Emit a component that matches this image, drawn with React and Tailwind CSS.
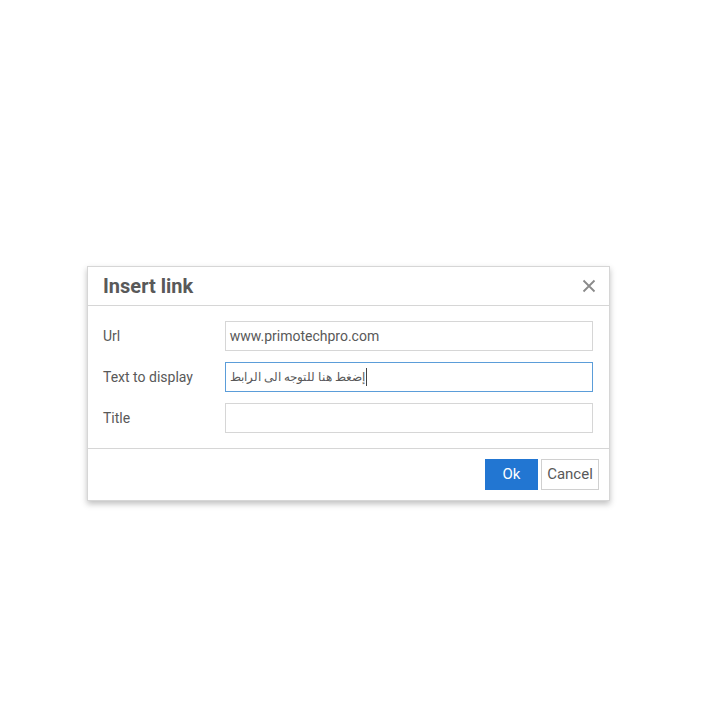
export default function App() {
  return (
    <div className="w-[720px] h-[726px] bg-white pt-[266px] pl-[87px]" style={{ fontFamily: 'Roboto, "Noto Sans", sans-serif' }}>
      <div className="w-[523px] bg-white border border-[#d6d6d6] shadow-[0_3px_6px_rgba(0,0,0,0.25)]">
        <div className="h-[39px] flex items-center justify-between pl-[15px] pr-[13px] border-b border-[#d6d6d6]">
          <span className="text-[20px] font-bold text-[#595959]">Insert link</span>
          <svg width="14" height="14" viewBox="0 0 14 14" className="text-[#8a8a8a]">
            <path d="M1.5 1.5 L12.5 12.5 M12.5 1.5 L1.5 12.5" stroke="currentColor" strokeWidth="1.8" />
          </svg>
        </div>
        <div className="pt-[15px] pb-[15px] pl-[15px] pr-[16px] flex flex-col gap-[11px] border-b border-[#d6d6d6]">
          <Row label="Url" value="www.primotechpro.com" />
          <Row label="Text to display" value="إضغط هنا للتوجه الى الرابط" focused />
          <Row label="Title" value="" />
        </div>
        <div className="h-[51px] flex items-center justify-end gap-[3px] pr-[10px]">
          <button className="w-[53px] h-[31px] bg-[#2276d2] text-white text-[15px]">Ok</button>
          <button className="w-[58px] h-[31px] bg-white border border-[#d0d0d0] text-[#595959] text-[15px]">Cancel</button>
        </div>
      </div>
    </div>
  );
}

function Row({ label, value, focused }) {
  return (
    <div className="flex items-center">
      <span className="w-[122px] text-[14px] text-[#595959]">{label}</span>
      <div
        className={
          'w-[369px] h-[30px] flex items-center px-[4px] text-[#595959] border ' +
          (focused ? 'border-[#5b9dd9] text-[12px]' : 'border-[#d6d6d6] text-[14px]')
        }
      >
        <span className="whitespace-nowrap">{value}</span>
        {focused && <span className="w-px h-[18px] bg-[#444] ml-[1px]" />}
      </div>
    </div>
  );
}
